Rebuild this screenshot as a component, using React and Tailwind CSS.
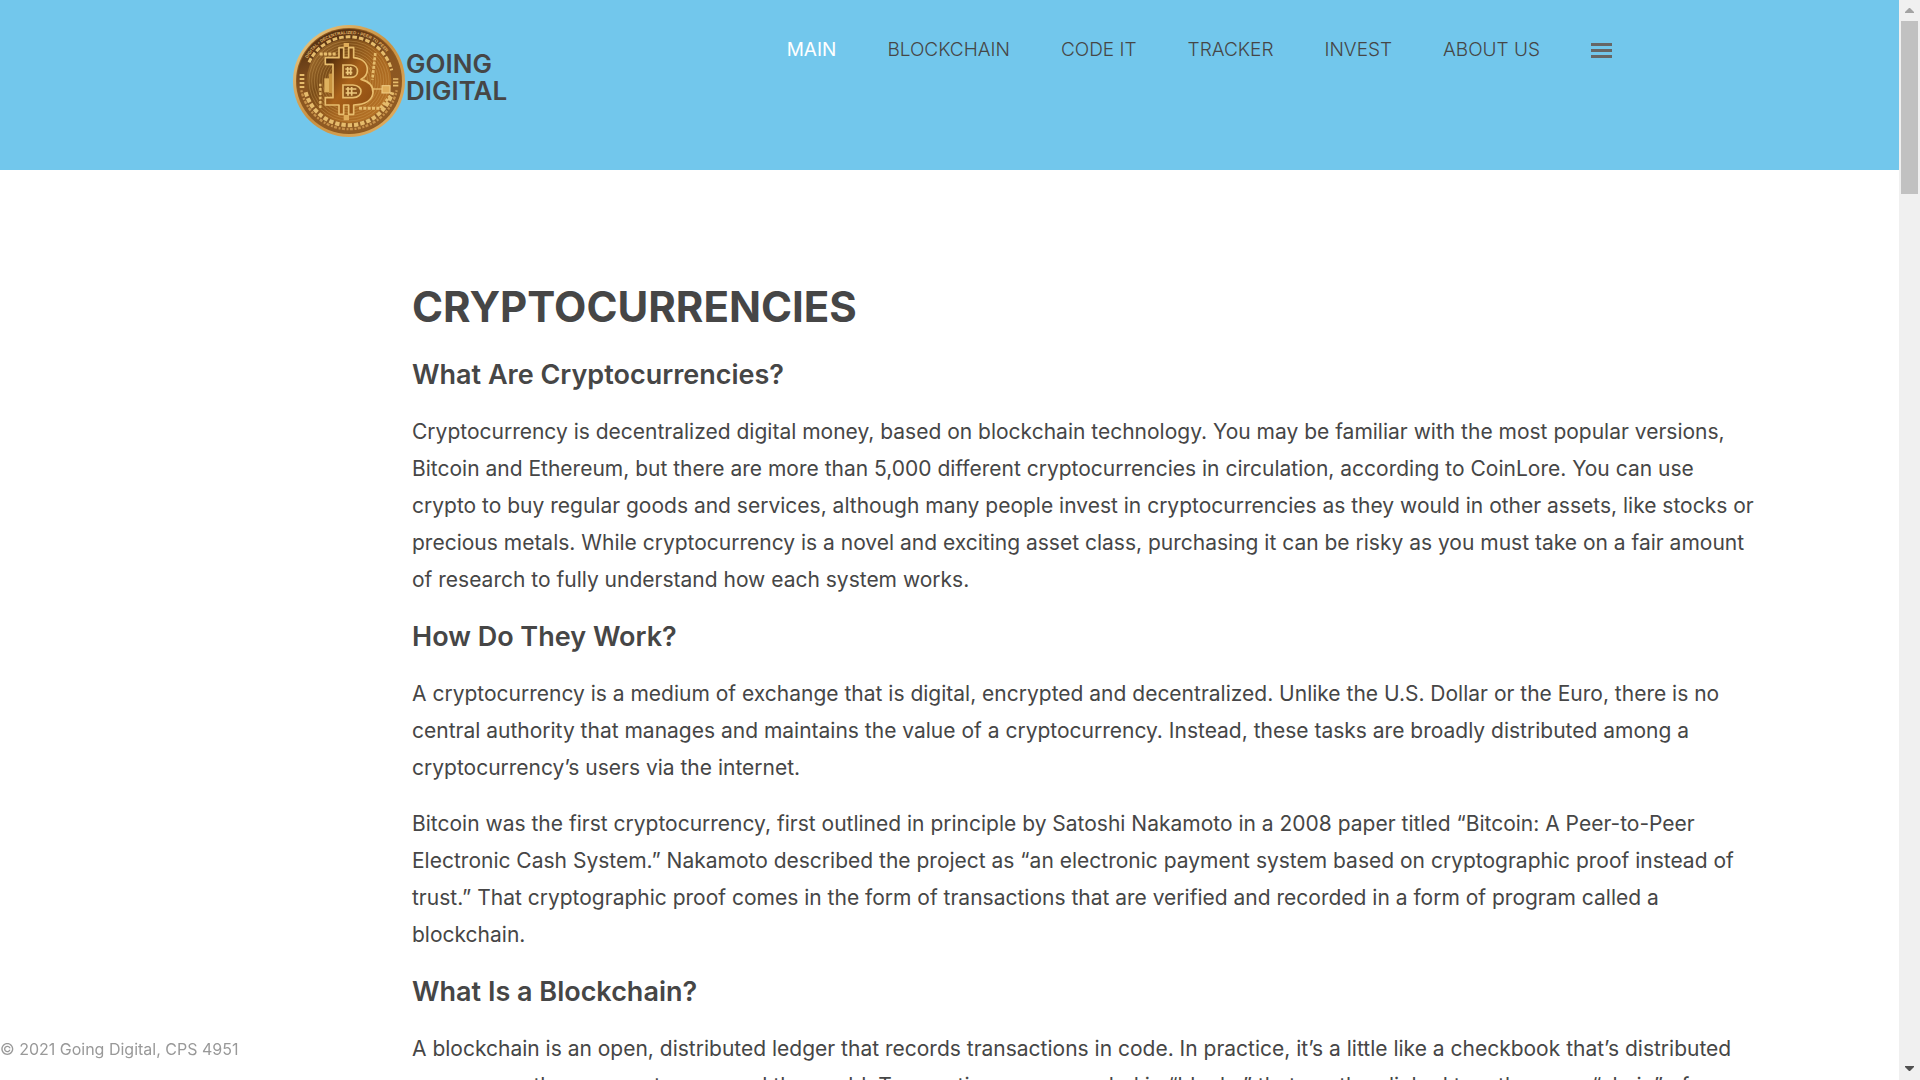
import React from "react";

const NAV = ["MAIN", "BLOCKCHAIN", "CODE IT", "TRACKER", "INVEST", "ABOUT US"];

const SECTIONS = [
  {
    title: "What Are Cryptocurrencies?",
    paragraphs: [
      "Cryptocurrency is decentralized digital money, based on blockchain technology. You may be familiar with the most popular versions, Bitcoin and Ethereum, but there are more than 5,000 different cryptocurrencies in circulation, according to CoinLore. You can use crypto to buy regular goods and services, although many people invest in cryptocurrencies as they would in other assets, like stocks or precious metals. While cryptocurrency is a novel and exciting asset class, purchasing it can be risky as you must take on a fair amount of research to fully understand how each system works.",
    ],
  },
  {
    title: "How Do They Work?",
    paragraphs: [
      "A cryptocurrency is a medium of exchange that is digital, encrypted and decentralized. Unlike the U.S. Dollar or the Euro, there is no central authority that manages and maintains the value of a cryptocurrency. Instead, these tasks are broadly distributed among a cryptocurrency’s users via the internet.",
      "Bitcoin was the first cryptocurrency, first outlined in principle by Satoshi Nakamoto in a 2008 paper titled “Bitcoin: A Peer-to-Peer Electronic Cash System.” Nakamoto described the project as “an electronic payment system based on cryptographic proof instead of trust.” That cryptographic proof comes in the form of transactions that are verified and recorded in a form of program called a blockchain.",
    ],
  },
  {
    title: "What Is a Blockchain?",
    paragraphs: [
      "A blockchain is an open, distributed ledger that records transactions in code. In practice, it’s a little like a checkbook that’s distributed across countless computers around the world. Transactions are recorded in “blocks” that are then linked together on a “chain” of previous cryptocurrency transactions.",
    ],
  },
];

function Coin() {
  const rings = [40, 48, 56, 64, 72, 80, 88, 96, 104, 112, 120];
  const symbol =
    "M97 98H138V68H152V98H167V68H182V98C210 101 224 116 223 136C222 150 215 158 204 163C228 169 241 182 240 203C238 226 216 239 182 240V268H167V240H152V268H138V240H97V218H120V118H97Z";
  return (
    <svg viewBox="0 0 336 336" className="size-28 shrink-0 overflow-hidden" aria-hidden="true">
      <defs>
        <linearGradient id="rim" x1="0" y1="0" x2="1" y2="1">
          <stop offset="0" stopColor="#efd08a" />
          <stop offset="0.5" stopColor="#c98f3f" />
          <stop offset="1" stopColor="#e2b468" />
        </linearGradient>
        <linearGradient id="face" x1="0" y1="0.1" x2="1" y2="0.8">
          <stop offset="0" stopColor="#a87433" />
          <stop offset="0.3" stopColor="#7a4c18" />
          <stop offset="0.6" stopColor="#a5651f" />
          <stop offset="1" stopColor="#b87426" />
        </linearGradient>
        <linearGradient id="band" x1="0.2" y1="0" x2="0.6" y2="1">
          <stop offset="0" stopColor="#4a2a10" />
          <stop offset="0.45" stopColor="#8a5520" />
          <stop offset="1" stopColor="#915c24" />
        </linearGradient>
        <linearGradient id="symbol" x1="0" y1="0" x2="1" y2="1">
          <stop offset="0" stopColor="#2c1808" />
          <stop offset="0.22" stopColor="#6b3c10" />
          <stop offset="0.5" stopColor="#a9621a" />
          <stop offset="1" stopColor="#8a4a12" />
        </linearGradient>
        <path id="arcTop" d="M35 119A142 142 0 0 1 301 119" />
      </defs>
      <circle cx="168" cy="168" r="168" fill="url(#rim)" />
      <circle cx="168" cy="168" r="159" fill="#8f5a20" />
      <circle cx="168" cy="168" r="156" fill="url(#band)" />
      <circle cx="168" cy="168" r="127" fill="url(#face)" />
      {rings.map((r) => (
        <circle key={r} cx="168" cy="168" r={r} fill="none" stroke="#d9ab62" strokeOpacity="0.5" strokeWidth="2" />
      ))}
      <path d="M48 112A132 132 0 0 1 296 136" fill="none" stroke="#e6bc6c" strokeWidth="9" strokeDasharray="14 6" />
      <path d="M38 202A135 135 0 0 0 298 202" fill="none" stroke="#e6bc6c" strokeWidth="12" strokeDasharray="13 6" />
      <path d="M25 196A146 146 0 0 0 311 196" fill="none" stroke="#c8924a" strokeWidth="7" strokeDasharray="6 4 9 5" />
      <text fontFamily="Liberation Sans" fontWeight="700" fontSize="13" fill="#e0b266">
        <textPath href="#arcTop" startOffset="6%">
          DIGITAL • DECENTRALIZED • PEER TO PEER
        </textPath>
      </text>
      <g fill="none" stroke="#e6bc6c">
        <path d="M80 87H132" strokeWidth="9" strokeDasharray="9 4" />
        <path d="M247 84L238 164" strokeWidth="8" strokeDasharray="9 4" />
        <path d="M82 176V250" strokeWidth="7" strokeDasharray="8 5" />
        <path d="M198 250H262L292 212" strokeWidth="9" strokeDasharray="9 4" />
        <path d="M240 192H268" strokeWidth="4" />
        <path d="M300 162H316M300 172H316M300 182H316" strokeWidth="5" />
        <path d="M20 150H34M20 162H34M20 174H34M20 186H34" strokeWidth="6" />
      </g>
      <rect x="267" y="182" width="24" height="22" fill="#e0ad59" stroke="#f0cd85" strokeWidth="3" />
      <rect x="94" y="160" width="17" height="42" fill="#dfb25e" />
      <rect x="108" y="146" width="10" height="58" fill="#c8933f" />
      <path d="M152 66V54H168V66M152 270V286H168V270" fill="#e0ad59" />
      <path d={symbol} fill="url(#symbol)" stroke="#e8bd6d" strokeWidth="5" strokeLinejoin="round" />
      <g fill="#8a531b" stroke="#e8bd6d" strokeWidth="5">
        <path d="M150 120H174C200 121 200 156 174 157H150Z" />
        <path d="M150 180H180C212 181 212 217 180 218H150Z" />
      </g>
      <path d="M157 132H178M164 126V150M173 126V150M158 143H178M158 192H190M165 186V212M176 186V212M158 204H192" stroke="#edc87c" strokeWidth="5" />
    </svg>
  );
}

function Scrollbar() {
  return (
    <div aria-hidden="true" className="flex w-[21px] shrink-0 flex-col items-center bg-[#f0f0f0]">
      <div className="flex h-[21px] items-center">
        <svg viewBox="0 0 9 5" className="h-[5px] w-[9px]" fill="#a3a3a3">
          <path d="M4 0H5L9 4V5H0V4Z" />
        </svg>
      </div>
      <div className="h-[173px] w-[17px] bg-[#c1c1c1]" />
      <div className="mt-auto flex h-[23px] items-center">
        <svg viewBox="0 0 9 5" className="h-[5px] w-[9px]" fill="#505050">
          <path d="M4 5H5L9 1V0H0V1Z" />
        </svg>
      </div>
    </div>
  );
}

export default function App() {
  return (
    <div className="flex h-screen overflow-hidden bg-white font-['Inter',sans-serif] text-[#464646]">
      <div className="min-w-0 flex-1 overflow-hidden">
        <header className="flex h-[170px] items-start justify-between bg-[#72c7ec] pl-[293px] pr-[287px]">
          <a href="#home" className="flex items-center gap-px pt-[25px]">
            <Coin />
            <span className="mb-2 text-[26px] leading-[27px] font-semibold">
              GOING
              <br />
              DIGITAL
            </span>
          </a>
          <nav className="flex items-center gap-[51px] pt-9">
            <ul className="flex gap-[51px] text-[19px] leading-7 font-light">
              {NAV.map((label, i) => (
                <li key={label}>
                  <a href={"#" + label.toLowerCase().replace(" ", "-")} className={i === 0 ? "font-normal text-white" : ""}>
                    {label}
                  </a>
                </li>
              ))}
            </ul>
            <button type="button" aria-label="Menu" className="flex flex-col gap-[3px]">
              <span className="h-[3px] w-[21px] bg-[#666]" />
              <span className="h-[3px] w-[21px] bg-[#666]" />
              <span className="h-[3px] w-[21px] bg-[#666]" />
            </button>
          </nav>
        </header>
        <main className="pt-[111px] pr-[140px] pl-[412px]">
          <h1 className="mb-[22px] text-[42px] leading-[52px] font-bold">CRYPTOCURRENCIES</h1>
          {SECTIONS.map((section) => (
            <section key={section.title}>
              <h2 className="mb-[19px] text-[27px] leading-[39px] font-semibold">{section.title}</h2>
              {section.paragraphs.map((text) => (
                <p key={text} className="mb-[19px] text-[21px] leading-[37px]">
                  {text}
                </p>
              ))}
            </section>
          ))}
        </main>
      </div>
      <footer className="fixed bottom-0 left-0 pb-[19px] text-base leading-6 text-[#999]">© 2021 Going Digital, CPS 4951</footer>
      <Scrollbar />
    </div>
  );
}
